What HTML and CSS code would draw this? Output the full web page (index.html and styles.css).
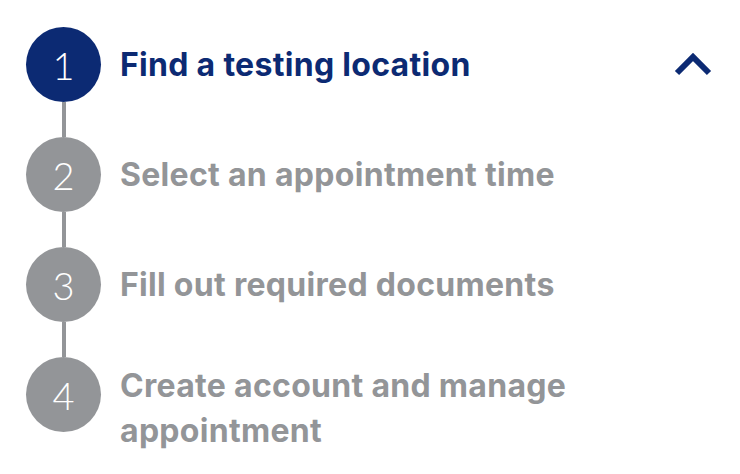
FILE: index.html
```html
<!DOCTYPE html>
<html lang="en">
<head>
<meta charset="utf-8">
<title>Steps</title>
<link rel="stylesheet" href="styles.css">
</head>
<body>
<ol class="steps">
  <li class="step step--active">
    <div class="marker"><span class="circle">1</span><span class="line"></span></div>
    <div class="label">Find a testing location</div>
    <svg class="chevron" width="38" height="26" viewBox="0 0 38 26" aria-hidden="true"><path d="M3 22 L19 6 L35 22" fill="none" stroke="#0c2a73" stroke-width="6" stroke-linejoin="miter" stroke-linecap="butt"/></svg>
  </li>
  <li class="step">
    <div class="marker"><span class="circle">2</span><span class="line"></span></div>
    <div class="label">Select an appointment time</div>
  </li>
  <li class="step">
    <div class="marker"><span class="circle">3</span><span class="line"></span></div>
    <div class="label">Fill out required documents</div>
  </li>
  <li class="step step--last">
    <div class="marker"><span class="circle">4</span></div>
    <div class="label label--multi">Create account and manage<br>appointment</div>
  </li>
</ol>
</body>
</html>
```
FILE: styles.css
```css
html, body {
  margin: 0;
  padding: 0;
  background: #ffffff;
}

.steps {
  list-style: none;
  margin: 0;
  padding: 27px 28px 0 26px;
  width: 740px;
  box-sizing: border-box;
  font-family: Inter, "Liberation Sans", sans-serif;
}

.step {
  display: flex;
  align-items: flex-start;
  gap: 19px;
}

.marker {
  display: flex;
  flex-direction: column;
  align-items: center;
  width: 75px;
  flex: 0 0 75px;
}

.circle {
  width: 75px;
  height: 75px;
  border-radius: 50%;
  background: #939598;
  color: #ffffff;
  display: flex;
  align-items: center;
  justify-content: center;
  font-family: Lato, Inter, sans-serif;
  font-weight: 300;
  font-size: 38px;
  line-height: 1;
}

.step--active .circle {
  background: #0c2a73;
}

.line {
  width: 4px;
  height: 35px;
  background: #939598;
}

.label {
  height: 75px;
  display: flex;
  align-items: center;
  font-size: 32px;
  font-weight: 700;
  line-height: 45px;
  color: #939598;
  letter-spacing: 0.3px;
}

.step--active .label {
  color: #0c2a73;
}

.label--multi {
  height: auto;
  display: block;
  padding-top: 6px;
}

.chevron {
  margin-left: auto;
  margin-top: 24px;
  flex: 0 0 auto;
}
```
